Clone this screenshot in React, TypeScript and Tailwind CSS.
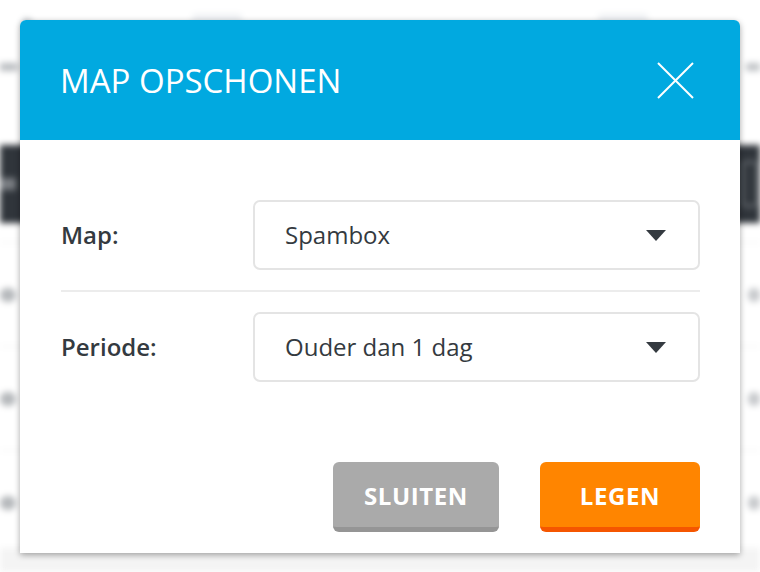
import React from "react";

function Caret() {
  return (
    <svg width="20" height="11" viewBox="0 0 20 11" className="shrink-0">
      <path d="M0 0 H20 L10 11 Z" fill="#343a40" />
    </svg>
  );
}

function Select({ value }: { value: string }) {
  return (
    <div className="flex-1 h-[70px] flex items-center justify-between pl-[30px] pr-[32px] border-2 border-[#e4e4e4] rounded-[7px] bg-white">
      <span className="text-[24px] text-[#343a40]">{value}</span>
      <Caret />
    </div>
  );
}

function Backdrop() {
  return (
    <div className="absolute inset-0 bg-white blur-[3px]">
      <div className="h-[45px] flex items-center px-[22px] gap-[160px]">
        <div className="w-[10px] h-[10px] rounded-full bg-[#c9ccd0]" />
        <div className="w-[50px] h-[18px] rounded bg-[#eef0f3]" />
        <div className="ml-auto mr-[90px] w-[50px] h-[18px] rounded bg-[#eef0f3]" />
      </div>
      <div className="h-[100px] flex items-start pt-[18px]">
        <div className="w-[18px] h-[8px] bg-[#b9bcc0]" />
        <div className="ml-auto w-[14px] h-[8px] bg-[#c0c3c6]" />
      </div>
      <div className="h-[78px] bg-[#30353b] flex items-center justify-between">
        <div className="w-[16px] h-[12px] bg-[#7a7e83]" />
        <div className="w-[16px] h-[46px] mr-[2px] rounded border-2 border-[#7a7e83]" />
      </div>
      <div className="h-[20px] border-b border-[#eeeeee]" />
      {[0, 1, 2].map((i) => (
        <div key={i} className="h-[104px] border-b border-[#efefef] flex items-center justify-between">
          <div className="w-[16px] h-[14px] rounded-full bg-[#b5b8bb]" />
          <div className="w-[12px] h-[14px] rounded-full bg-[#c6c8cb]" />
        </div>
      ))}
      <div className="absolute left-0 right-0 bottom-0 h-[24px] bg-[#f4f4f4]" />
    </div>
  );
}

export default function App() {
  return (
    <div className="relative w-[760px] h-[572px] overflow-hidden bg-white font-['Open_Sans',sans-serif]">
      <Backdrop />

      <div className="absolute left-[20px] top-[20px] w-[720px] bg-white rounded-t-[6px] shadow-[0_2px_6px_rgba(0,0,0,0.35)]">
        <div className="h-[120px] bg-[#01a9e0] rounded-t-[6px] flex items-center justify-between pl-[40px] pr-[46px]">
          <h1 className="text-[33px] text-white leading-none pt-[1px]">MAP OPSCHONEN</h1>
          <svg width="37" height="37" viewBox="0 0 37 37">
            <path d="M1 1 L36 36 M36 1 L1 36" stroke="white" strokeWidth="2" />
          </svg>
        </div>

        <div className="pt-[60px] pb-[21px] pl-[41px] pr-[40px]">
          <div className="flex items-center">
            <label className="w-[192px] text-[24px] font-semibold text-[#343a40]">Map:</label>
            <Select value="Spambox" />
          </div>
          <div className="h-[2px] bg-[#ececec] my-[20px]" />
          <div className="flex items-center">
            <label className="w-[192px] text-[24px] font-semibold text-[#343a40]">Periode:</label>
            <Select value="Ouder dan 1 dag" />
          </div>

          <div className="flex justify-end gap-[41px] mt-[80px]">
            <button className="w-[166px] h-[70px] rounded-[6px] bg-[#aaaaaa] border-b-[5px] border-[#959595] text-white text-[24px] font-bold tracking-[0.6px] pt-[2px]">
              SLUITEN
            </button>
            <button className="w-[160px] h-[70px] rounded-[6px] bg-[#ff8500] border-b-[5px] border-[#f55600] text-white text-[24px] font-bold tracking-[0.6px] pt-[2px]">
              LEGEN
            </button>
          </div>
        </div>
      </div>
    </div>
  );
}
